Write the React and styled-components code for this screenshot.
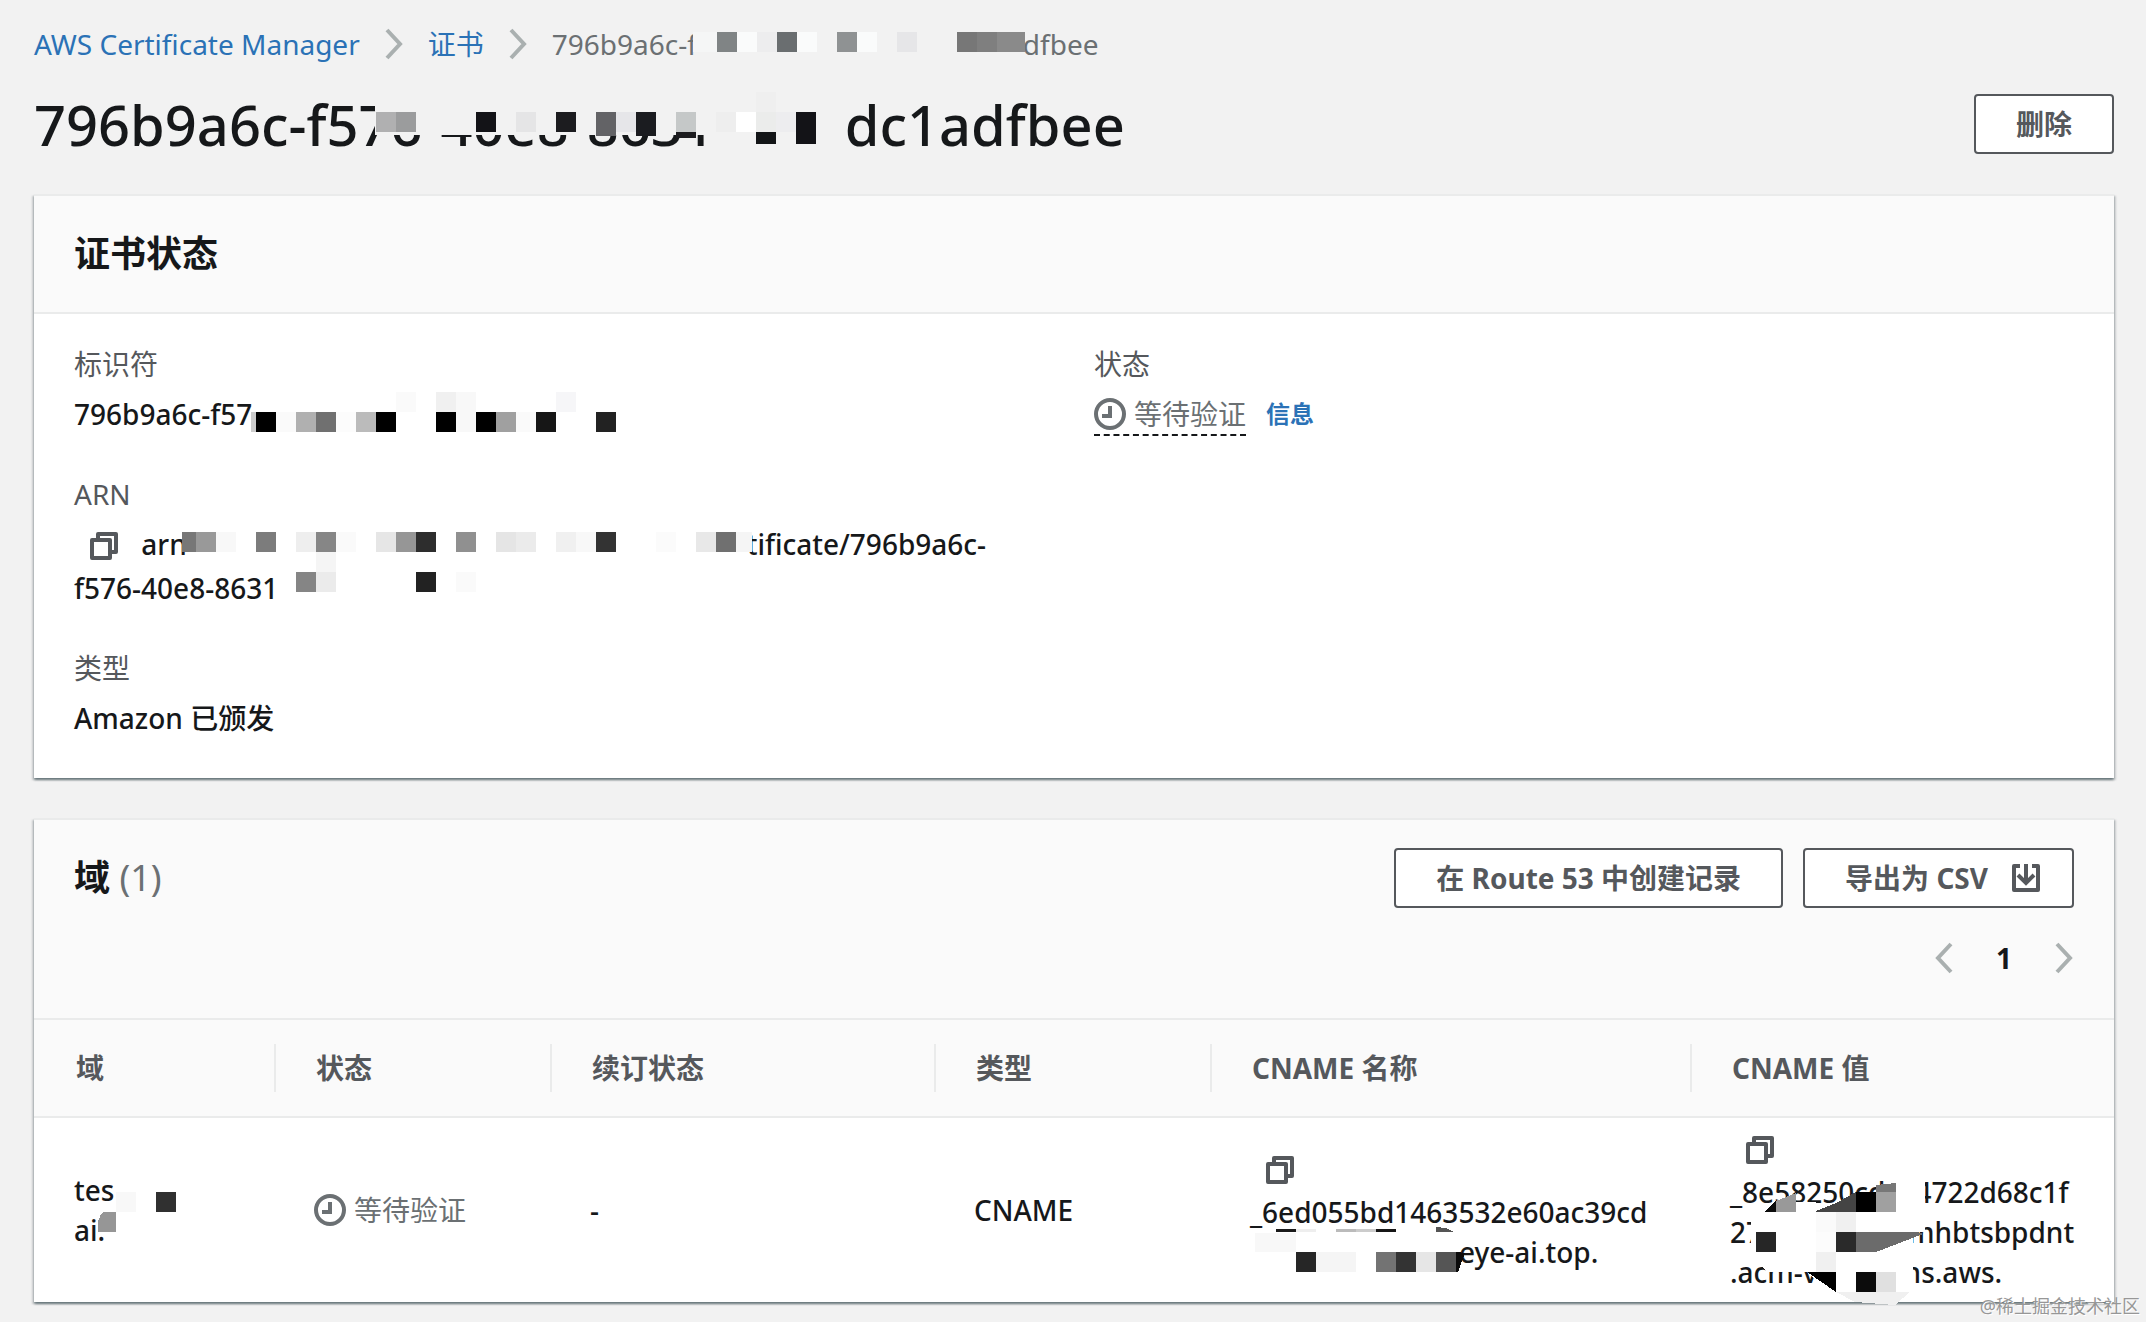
import React from 'react';
import styled, { createGlobalStyle, css } from 'styled-components';

const GlobalStyle = createGlobalStyle`
  * {
    box-sizing: border-box;
  }
  body {
    margin: 0;
    background: #f2f2f2;
    color: #16181a;
    font-family: 'Noto Sans', 'Noto Sans CJK SC', sans-serif;
    font-size: 28px;
    line-height: 40px;
  }
`

const Page = styled.div`
  position: relative;
  min-height: 100vh;
  padding: 24px 32px 20px 34px;
`

const Breadcrumbs = styled.nav`
  display: flex;
  align-items: center;
  gap: 24px;
`

const Link = styled.a`
  color: #2b72b6;
  text-decoration: none;
  white-space: nowrap;
`

const InfoLink = styled(Link)`
  font-size: 24px;
  font-weight: 700;
`

const Current = styled.span`
  position: relative;
  color: #6b7073;
  white-space: nowrap;
`

const TitleRow = styled.header`
  display: flex;
  align-items: center;
  justify-content: space-between;
  margin: 26px 0 36px;
`

const Title = styled.h1`
  position: relative;
  margin: 0;
  font-size: 56px;
  font-weight: 500;
  line-height: 68px;
  white-space: nowrap;
`

const Button = styled.button`
  display: inline-flex;
  align-items: center;
  gap: 24px;
  height: 60px;
  padding: 0 ${props => (props.$icon ? '32px' : '40px')} 0 40px;
  border: 2px solid #55585c;
  border-radius: 4px;
  background: white;
  color: #55585c;
  font: inherit;
  font-weight: 700;
  white-space: nowrap;
`

const IconButton = styled.button`
  display: inline-flex;
  align-items: center;
  height: ${props => props.$height || 40}px;
  padding: 0 ${props => props.$pad || 0}px;
  border: 0;
  background: none;
  vertical-align: top;
`

const Panel = styled.section`
  border-top: 2px solid #eaebeb;
  background: white;
  box-shadow: 0 2px 2px 0 rgba(0, 28, 36, 0.4), 2px 2px 2px 0 rgba(0, 28, 36, 0.15), -2px 2px 2px 0 rgba(0, 28, 36, 0.15);

  & + & {
    margin-top: 40px;
  }
`

const PanelHeader = styled.div`
  padding: ${props => (props.$tools ? '28px 40px 40px' : '36px 40px')};
  border-bottom: 2px solid #eaebeb;
  background: #fafafa;
`

const PanelTitle = styled.h2`
  margin: 0;
  font-size: 36px;
  font-weight: 700;
  line-height: 44px;
`

const Counter = styled.span`
  color: #6b7073;
  font-weight: 400;
`

const HeaderRow = styled.div`
  display: flex;
  align-items: center;
  justify-content: space-between;
`

const Actions = styled.div`
  display: flex;
  gap: 20px;
`

const Pagination = styled.div`
  display: flex;
  align-items: center;
  justify-content: flex-end;
  gap: 42px;
  margin-top: 30px;
  font-weight: 700;
`

const Columns = styled.div`
  display: grid;
  grid-template-columns: 1fr 1fr;
  gap: 40px;
  padding: 30px 40px 40px;
`

const Fields = styled.dl`
  display: flex;
  flex-direction: column;
  gap: 40px;
  margin: 0;
`

const Label = styled.dt`
  margin-bottom: 10px;
  color: #55585c;
`

const Value = styled.dd`
  position: relative;
  margin: 0;
  font-weight: 500;
`

const Line = styled.div`
  white-space: nowrap;
`

const StatusLine = styled.div`
  display: flex;
  align-items: center;
  gap: 20px;
`

const Status = styled.span`
  display: inline-flex;
  align-items: center;
  gap: 8px;
  color: #6b7073;
  font-weight: 400;
  vertical-align: top;
  ${props => props.$dashed && css`
    margin-bottom: -2px;
    border-bottom: 2px dashed #16181a;
  `}
`

const Table = styled.table`
  width: 100%;
  border-collapse: separate;
  border-spacing: 0;
  table-layout: fixed;
`

const HeadCell = styled.th`
  width: ${props => props.$width};
  height: 98px;
  padding: 24px 0;
  border-bottom: 2px solid #eaebeb;
  background: #fafafa;
  color: #55585c;
  text-align: left;
  vertical-align: top;

  & > div {
    height: 48px;
    padding-left: 40px;
    border-right: 2px solid #eaebeb;
    line-height: 48px;
  }
  &:first-child > div {
    padding-left: 42px;
  }
  &:last-child > div {
    border-right: 0;
  }
`

const Cell = styled.td`
  padding: 10px 0 10px 38px;
  font-weight: 500;
  vertical-align: middle;

  &:first-child {
    padding-left: 40px;
  }
`

const CellText = styled.div`
  position: relative;
`

// blank stretch of a value that is hidden from view
const Gap = styled.span`
  display: inline-block;
  width: ${props => props.$width}px;
`

const Overlay = styled.svg`
  position: absolute;
  top: 0;
  left: 0;
  width: 100%;
  height: 100%;
  overflow: visible;
  pointer-events: none;
`

const Watermark = styled.div`
  position: absolute;
  right: 6px;
  bottom: 4px;
  color: #979797;
  font-size: 18px;
  line-height: 24px;
  text-shadow: 1px 1px 0 white;
`

// cells: [x, y, fill, width, height], 20px squares unless a size is given
const Mosaic = ({ cells = [], children }) => (
  <Overlay aria-hidden="true" shapeRendering="crispEdges">
    {children}
    {cells.map(([x, y, fill, w = 20, h = 20]) => (
      <rect key={`${x}-${y}`} x={x} y={y} width={w} height={h} fill={fill} />
    ))}
  </Overlay>
)

const Chevron = ({ left }) => (
  <svg width="20" height="32" viewBox="0 0 20 32" fill="none" stroke="#aab0b0" strokeWidth="4" aria-hidden="true">
    <path d={left ? 'M17 2L4 16l13 14' : 'M3 2l13 14L3 30'} />
  </svg>
)

const CopyIcon = () => (
  <svg width="28" height="28" viewBox="0 0 28 28" fill="none" stroke="#55585c" strokeWidth="4" strokeLinejoin="round">
    <path d="M8 8V2h18v18h-6" />
    <path d="M2 8h18v18H2z" />
  </svg>
)

const ClockIcon = () => (
  <svg width="32" height="32" viewBox="0 0 32 32" fill="none" stroke="#6b7073" strokeWidth="4" aria-hidden="true">
    <circle cx="16" cy="16" r="14" />
    <path d="M16 8v10H8" />
  </svg>
)

const DownloadIcon = () => (
  <svg width="28" height="28" viewBox="0 0 28 28" fill="none" stroke="#55585c" strokeWidth="4" aria-hidden="true">
    <path d="M8 2H2v24h24V2h-6" strokeLinejoin="round" />
    <path d="M14 0v18M6 11l8 8 8-8" />
  </svg>
)

const CopyButton = () => (
  <IconButton $height={44} $pad={16} aria-label="复制">
    <CopyIcon />
  </IconButton>
)

const breadcrumbCells = [
  [141, 8, '#f5f6f6', 24],
  [165, 8, '#808485'],
  [185, 8, '#fafbfb'],
  [205, 8, '#ededee'],
  [225, 8, '#6a6e70'],
  [245, 8, '#fafbfb'],
  [285, 8, '#8f9293'],
  [305, 8, '#fafbfb'],
  [345, 8, '#e6e6e8'],
  [405, 8, '#777777'],
  [425, 8, '#7f7f7f'],
  [445, 8, '#8a8a8a', 28],
]

const titleCells = [
  [342, 22, '#b0b0b1'],
  [362, 22, '#9b9c9d'],
  [442, 22, '#131317'],
  [482, 22, '#e5e5e6'],
  [522, 22, '#1c1c1f'],
  [562, 22, '#636366', 20, 24],
  [582, 22, '#e6e6e9'],
  [602, 22, '#1b1c20', 20, 24],
  [642, 22, '#c5c8c8'],
  [642, 42, '#1c1c1f', 20, 6],
  [682, 22, '#eeeeee'],
  [702, 22, '#ffffff'],
  [722, 2, '#efefef'],
  [722, 22, '#ebeceb'],
  [722, 42, '#131517', 20, 12],
  [742, 22, '#ededef'],
  [762, 22, '#131317', 20, 32],
]

const idCells = [
  [177, 18, '#cccccc', 5],
  [182, 18, '#000000'],
  [202, 18, '#fafafa'],
  [222, 18, '#b0b0b0'],
  [242, 18, '#707070'],
  [262, 18, '#fcfcfc'],
  [282, 18, '#bbbbbb'],
  [302, 18, '#000000'],
  [322, -2, '#fafafa'],
  [362, -2, '#f0f0f0'],
  [362, 18, '#000000'],
  [382, -2, '#f8f8f8'],
  [382, 18, '#f8f8f8'],
  [402, 18, '#000000'],
  [422, 18, '#a0a0a0'],
  [442, 18, '#fafafa'],
  [462, 18, '#161616'],
  [482, -2, '#f6f6f8'],
  [522, 18, '#222222'],
]

const arnCells = [
  [108, 8, '#777777', 14],
  [122, 8, '#999999'],
  [142, 8, '#f8f8f8'],
  [182, 8, '#7c7c7c'],
  [222, 8, '#eeeeee'],
  [242, 8, '#868686'],
  [262, 8, '#fafafa'],
  [302, 8, '#e6e6e6'],
  [322, 8, '#969696'],
  [342, 8, '#2d2d2d'],
  [382, 8, '#909090'],
  [422, 8, '#e5e5e5'],
  [442, 8, '#ebebeb'],
  [482, 8, '#f0f0f0'],
  [502, 8, '#f8f8f8'],
  [522, 8, '#333333'],
  [582, 8, '#fbfbfb'],
  [622, 8, '#e8e8e8'],
  [642, 8, '#707070'],
  [662, 8, '#f5f5f5', 16],
  [242, 28, '#f5f5f5'],
  [222, 48, '#858585'],
  [242, 48, '#ebebeb'],
  [342, 48, '#222222'],
  [382, 48, '#fafafa'],
]

const domainCells = [
  [42, 22, '#f8f8f8'],
  [82, 22, '#303030'],
]

const nameCells = [
  [26, 81, '#1a1a1a', 20, 3],
  [46, 81, '#eeeeee', 20, 3],
  [86, 81, '#bbbbbb', 20, 3],
  [106, 81, '#cccccc', 20, 3],
  [126, 81, '#161616', 20, 3],
  [5, 85, '#f8f8f8', 41, 19],
  [46, 104, '#262626'],
  [66, 104, '#f5f5f5', 40],
  [126, 104, '#737373'],
  [146, 104, '#333333'],
  [166, 104, '#e6e6e6'],
  [186, 104, '#555555'],
]

const valueCells = [
  [126, 64, '#000000'],
  [86, 84, '#fafafa'],
  [106, 84, '#f0f0f0'],
  [26, 104, '#262626'],
  [86, 104, '#fcfcfc'],
  [106, 104, '#2a2a2a'],
  [86, 124, '#f0f0f0'],
  [126, 144, '#0c0c0c'],
  [146, 144, '#e0e0e0'],
]

const columns = [
  ['域', '11.635%'],
  ['状态', '13.269%'],
  ['续订状态', '18.461%'],
  ['类型', '13.269%'],
  ['CNAME 名称', '23.077%'],
  ['CNAME 值', 'auto'],
]

const StatusPanel = () => (
  <Panel>
    <PanelHeader>
      <PanelTitle>证书状态</PanelTitle>
    </PanelHeader>
    <Columns>
      <Fields>
        <div>
          <Label>标识符</Label>
          <Value>
            796b9a6c-f57
            <Mosaic cells={idCells} />
          </Value>
        </div>
        <div>
          <Label>ARN</Label>
          <Value>
            <Line>
              <CopyButton /> arn<Gap $width={560} />tificate/796b9a6c-
            </Line>
            <Line>f576-40e8-8631</Line>
            <Mosaic cells={arnCells} />
          </Value>
        </div>
        <div>
          <Label>类型</Label>
          <Value>Amazon 已颁发</Value>
        </div>
      </Fields>
      <Fields>
        <div>
          <Label>状态</Label>
          <Value>
            <StatusLine>
              <Status $dashed><ClockIcon />等待验证</Status>
              <InfoLink href="#info">信息</InfoLink>
            </StatusLine>
          </Value>
        </div>
      </Fields>
    </Columns>
  </Panel>
)

const DomainsPanel = () => (
  <Panel>
    <PanelHeader $tools>
      <HeaderRow>
        <PanelTitle>域 <Counter>(1)</Counter></PanelTitle>
        <Actions>
          <Button>在 Route 53 中创建记录</Button>
          <Button $icon>导出为 CSV<DownloadIcon /></Button>
        </Actions>
      </HeaderRow>
      <Pagination>
        <IconButton aria-label="上一页"><Chevron left /></IconButton>
        <span>1</span>
        <IconButton aria-label="下一页"><Chevron /></IconButton>
      </Pagination>
    </PanelHeader>
    <Table>
      <thead>
        <tr>
          {columns.map(([name, width]) => (
            <HeadCell key={name} $width={width}><div>{name}</div></HeadCell>
          ))}
        </tr>
      </thead>
      <tbody>
        <tr>
          <Cell>
            <CellText>
              <Line>tes</Line>
              <Line>ai.</Line>
              <Mosaic cells={domainCells}>
                <path d="M24 62V52q2-8 6-10h12v20z" fill="#969696" />
              </Mosaic>
            </CellText>
          </Cell>
          <Cell><Status><ClockIcon />等待验证</Status></Cell>
          <Cell>-</Cell>
          <Cell>CNAME</Cell>
          <Cell>
            <CellText>
              <Line><CopyButton /></Line>
              <Line>_6ed055bd1463532e60ac39cd</Line>
              <Line><Gap $width={209} />eye-ai.top.</Line>
              <Mosaic cells={nameCells}>
                <path d="M186 79l10 1 8 4h-18z" fill="#555555" />
                <path d="M206 104l9 1-7 19h-2z" fill="#0c0c0c" />
              </Mosaic>
            </CellText>
          </Cell>
          <Cell>
            <CellText>
              <Line><CopyButton /></Line>
              <Line>_8e58250cd<Gap $width={30} />4722d68c1f</Line>
              <Line>27<Gap $width={146} />mhbtsbpdnt</Line>
              <Line>.acm-v<Gap $width={86} />ns.aws.</Line>
              <Mosaic cells={valueCells}>
                <path d="M166 50h29v34h-29zM21 94l8-10h166v20h-12v62h-80l-26-22H37l-16-20zM66 74h20v10H66z" fill="white" />
                <path d="M34 84l12-12v12z" fill="#0c0c0c" />
                <path d="M46 73l20-8v19H46z" fill="#999999" />
                <path d="M86 83l20-8 20-11v20H86z" fill="#444444" />
                <path d="M146 57l20-2v29h-20z" fill="#a0a0a0" />
                <path d="M146 57l20-2v9h-20z" fill="#777777" />
                <path d="M126 104h61l6 2-47 18h-20z" fill="#6b6b6b" />
                <path d="M77 144h29v20z" fill="#000000" />
                <path d="M106 164h74l-15 13-40-3z" fill="#f0f0f0" />
              </Mosaic>
            </CellText>
          </Cell>
        </tr>
      </tbody>
    </Table>
  </Panel>
)

const App = () => (
  <Page lang="zh-CN">
    <GlobalStyle />
    <Breadcrumbs aria-label="路径">
      <Link href="#acm">AWS Certificate Manager</Link>
      <Chevron />
      <Link href="#certificates">证书</Link>
      <Chevron />
      <Current>
        796b9a6c-f<Gap $width={326} />dfbee
        <Mosaic cells={breadcrumbCells} />
      </Current>
    </Breadcrumbs>
    <TitleRow>
      <Title>
        796b9a6c-f576-40e8-8631-<Gap $width={112} />dc1adfbee
        <Mosaic cells={titleCells}>
          <rect x="341" y="2" width="465" height="43" fill="#f2f2f2" />
        </Mosaic>
      </Title>
      <Button>删除</Button>
    </TitleRow>
    <main>
      <StatusPanel />
      <DomainsPanel />
    </main>
    <Watermark>@稀土掘金技术社区</Watermark>
  </Page>
)

export default App;
